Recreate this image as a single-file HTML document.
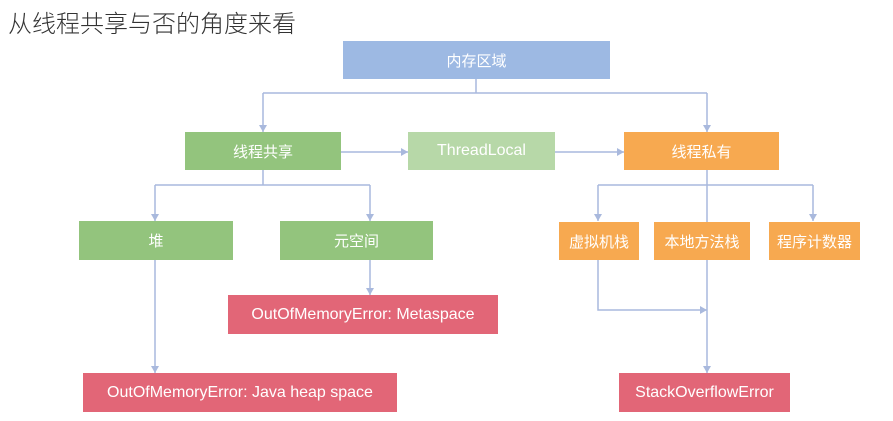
<!DOCTYPE html>
<html><head><meta charset="utf-8"><style>
body{margin:0;width:893px;height:421px;background:#fff;position:relative;overflow:hidden;font-family:"Liberation Sans","Noto Sans CJK SC",sans-serif}
.t{position:absolute;left:8px;top:4px;font-size:24px;color:#333;font-family:"Noto Sans CJK SC",sans-serif;font-weight:300}
.b{position:absolute;display:flex;align-items:center;justify-content:center;color:#fff;font-size:15px}
.bl{background:#9db9e3}.g{background:#93c47d}.lg{background:#b7d8a8}.o{background:#f7a950}.r{background:#e26677;font-size:16px}
svg{position:absolute;left:0;top:0}
</style></head><body>
<div class="t">从线程共享与否的角度来看</div>
<svg width="893" height="421" stroke="#a9b9dd" stroke-width="1.5" fill="none">
<path d="M476 79V93M263 93H707M263 93V132M707 93V132"/>
<path d="M341 152H408M555 152H624"/>
<path d="M263 170V185M155 185H370M155 185V221M370 185V221M370 260V295M155 260V373"/>
<path d="M707 170V373M598 185H813M598 185V221M813 185V221M598 260V310H707"/>
<g fill="#a9b9dd" stroke="none">
<path d="M259 125h8l-4 7z"/><path d="M703 125h8l-4 7z"/>
<path d="M401 148v8l7-4z"/><path d="M617 148v8l7-4z"/>
<path d="M151 214h8l-4 7z"/><path d="M366 214h8l-4 7z"/><path d="M366 288h8l-4 7z"/><path d="M151 366h8l-4 7z"/>
<path d="M594 214h8l-4 7z"/><path d="M809 214h8l-4 7z"/><path d="M703 366h8l-4 7z"/><path d="M700 306v8l7-4z"/>
</g>
</svg>
<div class="b bl" style="left:343px;top:41px;width:267px;height:38px">内存区域</div>
<div class="b g" style="left:185px;top:132px;width:156px;height:38px">线程共享</div>
<div class="b lg" style="left:408px;top:132px;width:147px;height:38px;font-size:16px">ThreadLocal</div>
<div class="b o" style="left:624px;top:132px;width:155px;height:38px">线程私有</div>
<div class="b g" style="left:79px;top:221px;width:154px;height:39px">堆</div>
<div class="b g" style="left:280px;top:221px;width:153px;height:39px">元空间</div>
<div class="b o" style="left:559px;top:222px;width:80px;height:38px">虚拟机栈</div>
<div class="b o" style="left:654px;top:222px;width:96px;height:38px">本地方法栈</div>
<div class="b o" style="left:769px;top:222px;width:91px;height:38px">程序计数器</div>
<div class="b r" style="left:228px;top:295px;width:270px;height:39px">OutOfMemoryError: Metaspace</div>
<div class="b r" style="left:83px;top:373px;width:314px;height:39px">OutOfMemoryError: Java heap space</div>
<div class="b r" style="left:619px;top:373px;width:171px;height:39px">StackOverflowError</div>
</body></html>
